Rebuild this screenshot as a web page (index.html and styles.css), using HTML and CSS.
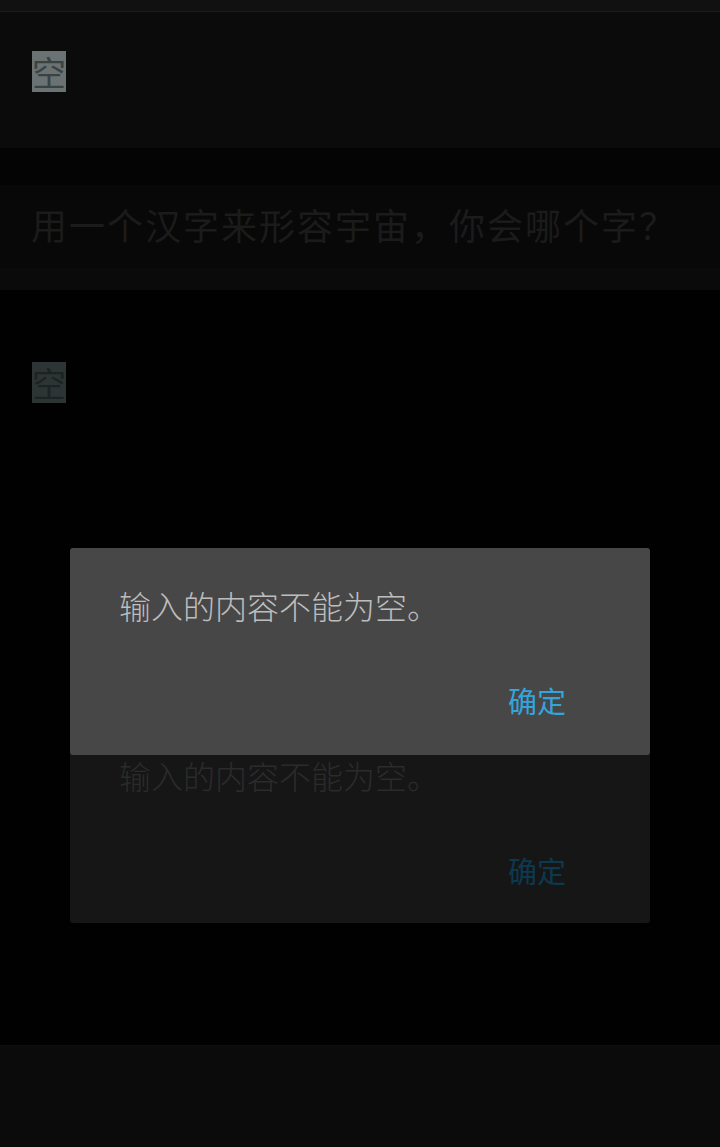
FILE: index.html
```html
<!DOCTYPE html>
<html lang="zh-CN">
<head>
<meta charset="utf-8">
<title>空</title>
<link rel="stylesheet" href="styles.css">
</head>
<body>
<div class="screen">
  <div class="status"></div>
  <header class="title-bar">
    <span class="sel sel-bright">空</span>
  </header>
  <section class="question">
    <div class="question-band">用一个汉字来形容宇宙，你会哪个字？</div>
    <div class="question-shadow"></div>
  </section>
  <section class="answer">
    <span class="sel sel-dim">空</span>
  </section>
  <footer class="nav"></footer>

  <div class="dialog dialog-ghost">
    <p class="dialog-msg">输入的内容不能为空。</p>
    <div class="dialog-actions"><span class="dialog-btn">确定</span></div>
  </div>
  <div class="dialog dialog-main">
    <p class="dialog-msg">输入的内容不能为空。</p>
    <div class="dialog-actions"><span class="dialog-btn">确定</span></div>
  </div>
</div>
</body>
</html>
```

FILE: styles.css
```css
* { box-sizing: border-box; }
html, body {
  margin: 0;
  padding: 0;
  background: #010101;
}
body {
  font-family: "Noto Sans CJK SC", "Noto Sans", sans-serif;
}
.screen {
  position: relative;
  width: 720px;
  height: 1147px;
  display: flex;
  flex-direction: column;
  overflow: hidden;
  background: #010101;
}
.status {
  height: 12px;
  background: #111111;
  border-bottom: 1px solid #1b1b1b;
  flex: none;
}
.title-bar {
  height: 136px;
  flex: none;
  background: #0b0b0b;
  padding: 39px 0 0 32px;
}
.sel {
  display: inline-block;
  font-size: 34px;
  line-height: 41px;
  height: 41px;
  width: 34px;
  text-align: center;
}
.sel-bright {
  background: #6b7273;
  color: #3b4242;
}
.sel-dim {
  background: #2d3434;
  color: #1d2323;
}
.question {
  flex: none;
  height: 142px;
  background: #040404;
  padding-top: 37px;
  display: flex;
  flex-direction: column;
}
.question-band {
  height: 83px;
  line-height: 78px;
  background: #080808;
  color: #1b1b1b;
  font-size: 36px;
  letter-spacing: 2px;
  padding-left: 31px;
  white-space: nowrap;
}
.question-shadow {
  height: 22px;
  background: #0a0a0a;
}
.answer {
  flex: 1;
  padding: 72px 0 0 32px;
  background: #010101;
}
.nav {
  flex: none;
  height: 102px;
  background: #0b0b0b;
  border-top: 1px solid #0f0f0f;
}
.dialog {
  position: absolute;
  left: 70px;
  width: 580px;
  border-radius: 3px;
  display: flex;
  flex-direction: column;
}
.dialog-main {
  top: 548px;
  height: 207px;
  background: #474747;
  z-index: 2;
}
.dialog-ghost {
  top: 718px;
  height: 205px;
  background: #161616;
  z-index: 1;
}
.dialog-msg {
  margin: 0;
  padding: 37px 0 0 49px;
  font-size: 32px;
  line-height: 40px;
  font-weight: 300;
  color: #bdbdbd;
  white-space: nowrap;
}
.dialog-actions {
  display: flex;
  justify-content: flex-end;
  padding: 55px 84px 0 0;
}
.dialog-btn {
  font-size: 29px;
  line-height: 40px;
  color: #33a5dd;
}
.dialog-ghost .dialog-msg { color: #2b2b2b; }
.dialog-ghost .dialog-btn { color: #0b3a50; }
```
